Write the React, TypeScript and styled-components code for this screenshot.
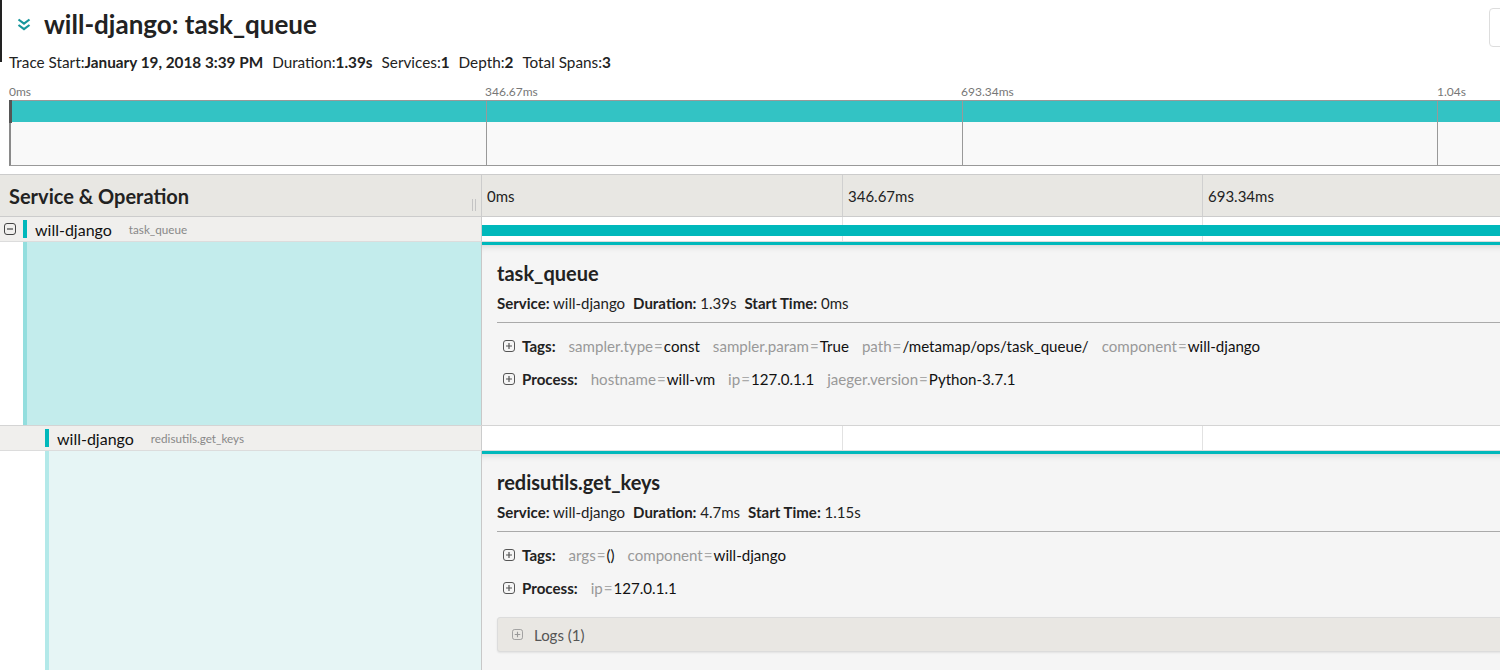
import React from "react";
import styled, { createGlobalStyle } from "styled-components";

const TEAL = "#00b8bb";

const GlobalStyle = createGlobalStyle`
  html, body { margin: 0; padding: 0; background: #fff; overflow: hidden; }
  body { font-family: Lato, "Open Sans", "Liberation Sans", sans-serif; color: #222; }
  * { box-sizing: border-box; }
`;

const Page = styled.div`
  width: 1922px;
  position: relative;
  &::before {
    content: "";
    position: absolute;
    left: 0;
    top: 0;
    width: 2px;
    height: 62px;
    background: #222;
  }
`;

const TitleRow = styled.header`
  display: grid;
  grid-template-columns: 1489px 240px;
  height: 48px;
  align-items: center;
`;

const TitleLeft = styled.div`
  display: flex;
  align-items: center;
  gap: 13px;
  padding-left: 17px;
`;

const Title = styled.h1`
  margin: 0;
  font-size: 26px;
  font-weight: 700;
  color: #222;
  line-height: 32px;
`;

const TopButton = styled.div`
  align-self: start;
  margin-top: 8px;
  height: 39px;
  border: 1px solid #ddd;
  border-radius: 4px;
  background: #fff;
`;

const MetaLine = styled.div`
  display: flex;
  gap: 9px;
  padding-left: 9px;
  height: 28px;
  line-height: 28px;
  font-size: 15.3px;
  color: #222;
`;

const Strong = styled.strong`
  font-weight: 700;
`;

const Minimap = styled.section`
  margin: 8px 0 0 9px;
  width: 1904px;
`;

const MiniLabels = styled.div`
  display: grid;
  grid-template-columns: repeat(4, 476px);
  height: 16px;
`;

const MiniLabel = styled.span`
  font-size: 12px;
  line-height: 15px;
  color: #777;
`;

const MiniBox = styled.div`
  position: relative;
  display: grid;
  grid-template-columns: repeat(4, 1fr);
  height: 66px;
  border: 1px solid #999;
  border-left: 2px solid #8a8a8a;
`;

const MiniCol = styled.div<{ $first?: boolean }>`
  display: flex;
  flex-direction: column;
  border-left: ${(p) => (p.$first ? "none" : "1px solid #999")};
`;

const MiniBand = styled.div`
  height: 21px;
  background: #33c3c4;
`;

const MiniRest = styled.div`
  flex: 1;
  background: #f9f9f9;
`;

const MiniHandle = styled.div`
  position: absolute;
  left: -2px;
  top: -1px;
  width: 3px;
  height: 23px;
  background: #555;
`;

const Table = styled.section`
  margin-top: 8px;
`;

const HeaderRow = styled.div`
  display: grid;
  grid-template-columns: 482px 1440px;
  height: 43px;
  background: #e8e7e3;
  border-top: 1px solid #ccc;
  border-bottom: 1px solid #ccc;
`;

const HeaderName = styled.div`
  display: flex;
  justify-content: space-between;
  align-items: center;
  padding-left: 9px;
  border-right: 1px solid #ccc;
  font-size: 20px;
  font-weight: 700;
  color: #222;
`;

const Resizer = styled.span`
  align-self: flex-end;
  margin: 0 5px 5px 0;
  width: 4px;
  height: 12px;
  border-left: 1px solid #c4c4c4;
  border-right: 1px solid #c4c4c4;
`;

const TickGrid = styled.div`
  position: relative;
  display: grid;
  grid-template-columns: repeat(4, 360px);
`;

const TickCell = styled.div<{ $first?: boolean; $light?: boolean }>`
  display: flex;
  align-items: center;
  padding-left: 5px;
  border-left: ${(p) =>
    p.$first ? "none" : `1px solid ${p.$light ? "#e2e2e2" : "#d0d0d0"}`};
  font-size: 15px;
  color: #222;
`;

const SpanRowBox = styled.div`
  display: grid;
  grid-template-columns: 482px 1440px;
  height: 25px;
  border-bottom: 1px solid #dcdcdc;
`;

const NameCell = styled.div<{ $indent: number }>`
  display: flex;
  align-items: center;
  padding-left: ${(p) => p.$indent}px;
  background: #f0efed;
  border-right: 1px solid #ccc;
`;

const ToggleSlot = styled.span`
  width: 23px;
  display: flex;
  align-items: center;
  padding-left: 4px;
`;

const Indicator = styled.span`
  width: 4px;
  height: 18px;
  background: ${TEAL};
  margin-right: 8px;
`;

const ServiceName = styled.span`
  font-size: 16px;
  color: #111;
`;

const OpName = styled.span`
  margin-left: 17px;
  font-size: 11.7px;
  color: #888;
`;

const Bar = styled.div`
  position: absolute;
  top: 8px;
  height: 11px;
  background: ${TEAL};
`;

const DetailRowBox = styled.div`
  display: grid;
  grid-template-columns: 482px 1440px;
  border-bottom: 1px solid #d4d4d4;
`;

const DetailLeft = styled.div<{ $indent: number }>`
  display: flex;
  padding-left: ${(p) => p.$indent}px;
  border-right: 1px solid #c8c8c8;
  background: #fff;
`;

const Accent = styled.div<{ $border: string; $fill: string }>`
  flex: 1;
  border-left: 4px solid ${(p) => p.$border};
  background: ${(p) => p.$fill};
`;

const DetailPanel = styled.div`
  background: #f5f5f5;
  border-top: 3px solid ${TEAL};
  box-shadow: inset 0 8px 8px -8px rgba(0, 0, 0, 0.18);
  padding: 16px 16px 34px 15px;
`;

const DetailTitle = styled.h2`
  margin: 0;
  font-size: 20px;
  font-weight: 700;
  line-height: 24px;
  color: #222;
`;

const DetailMeta = styled.div`
  display: flex;
  gap: 8px;
  margin-top: 8px;
  height: 20px;
  line-height: 20px;
  font-size: 15px;
  color: #222;
`;

const Divider = styled.hr`
  margin: 9px 0 0;
  border: none;
  border-top: 1px solid #aaa;
`;

const KVRow = styled.div<{ $first?: boolean }>`
  display: flex;
  align-items: center;
  gap: 13px;
  margin-top: ${(p) => (p.$first ? 11 : 9)}px;
  height: 24px;
  padding-left: 6px;
  font-size: 15.1px;
`;

const KVLabel = styled.span`
  display: flex;
  align-items: center;
  gap: 7px;
  font-weight: 700;
  color: #222;
`;

const KV = styled.span`
  color: #111;
`;

const Key = styled.span`
  color: #999;
`;

const Eq = styled.span`
  color: #aaa;
  margin: 0 1px;
`;

const LogsBox = styled.div`
  display: flex;
  align-items: center;
  gap: 11px;
  margin-top: 17px;
  height: 35px;
  padding-left: 14px;
  background: #e9e7e3;
  border: 1px solid #dcdcdc;
  border-radius: 3px;
  box-shadow: 0 1px 2px rgba(0, 0, 0, 0.08);
  font-size: 15px;
  color: #555;
`;

const ChevronIcon = () => (
  <svg width="14" height="13" viewBox="0 0 14 13">
    <path
      d="M1.5 1.5l5.5 4.2 5.5-4.2M1.5 7l5.5 4.2 5.5-4.2"
      fill="none"
      stroke="#17969c"
      strokeWidth="2.2"
    />
  </svg>
);

const SquareIcon = ({
  plus,
  size = 12,
  color = "#555",
}: {
  plus?: boolean;
  size?: number;
  color?: string;
}) => (
  <svg width={size} height={size} viewBox="0 0 12 12">
    <rect x="0.5" y="0.5" width="11" height="11" rx="2.5" fill="none" stroke={color} />
    <path d={plus ? "M3 6h6M6 3v6" : "M3 6h6"} stroke={color} strokeWidth="1.2" />
  </svg>
);

type Pair = [string, string];

type Span = {
  depth: number;
  service: string;
  op: string;
  start: number;
  duration: number;
  durationLabel: string;
  startLabel: string;
  hasChildren: boolean;
  tags: Pair[];
  process: Pair[];
  logs?: number;
  accentBorder: string;
  accentFill: string;
};

const TOTAL = 1390;

const spans: Span[] = [
  {
    depth: 0,
    service: "will-django",
    op: "task_queue",
    start: 0,
    duration: 1390,
    durationLabel: "1.39s",
    startLabel: "0ms",
    hasChildren: true,
    tags: [
      ["sampler.type", "const"],
      ["sampler.param", "True"],
      ["path", "/metamap/ops/task_queue/"],
      ["component", "will-django"],
    ],
    process: [
      ["hostname", "will-vm"],
      ["ip", "127.0.1.1"],
      ["jaeger.version", "Python-3.7.1"],
    ],
    accentBorder: "#93dede",
    accentFill: "#c3ecec",
  },
  {
    depth: 1,
    service: "will-django",
    op: "redisutils.get_keys",
    start: 1150,
    duration: 4.7,
    durationLabel: "4.7ms",
    startLabel: "1.15s",
    hasChildren: false,
    tags: [
      ["args", "()"],
      ["component", "will-django"],
    ],
    process: [["ip", "127.0.1.1"]],
    logs: 1,
    accentBorder: "#b3e9e9",
    accentFill: "#e6f5f5",
  },
];

const miniTicks = ["0ms", "346.67ms", "693.34ms", "1.04s"];
const ticks = ["0ms", "346.67ms", "693.34ms", "1.04s"];

const KVList = ({ label, pairs, first }: { label: string; pairs: Pair[]; first?: boolean }) => (
  <KVRow $first={first}>
    <KVLabel>
      <SquareIcon plus size={12} color="#555" />
      {label}:
    </KVLabel>
    {pairs.map(([k, v]) => (
      <KV key={k}>
        <Key>{k}</Key>
        <Eq>=</Eq>
        {v}
      </KV>
    ))}
  </KVRow>
);

const SpanRow = ({ span }: { span: Span }) => {
  const left = (span.start / TOTAL) * 1440;
  const width = Math.max((span.duration / TOTAL) * 1440, 2);
  return (
    <>
      <SpanRowBox>
        <NameCell $indent={span.depth * 22}>
          <ToggleSlot>{span.hasChildren && <SquareIcon size={12} color="#444" />}</ToggleSlot>
          <Indicator />
          <ServiceName>{span.service}</ServiceName>
          <OpName>{span.op}</OpName>
        </NameCell>
        <TickGrid>
          {ticks.map((t, i) => (
            <TickCell key={t} $first={i === 0} $light />
          ))}
          <Bar style={{ left, width }} />
        </TickGrid>
      </SpanRowBox>
      <DetailRowBox>
        <DetailLeft $indent={span.depth * 22 + 23}>
          <Accent $border={span.accentBorder} $fill={span.accentFill} />
        </DetailLeft>
        <DetailPanel>
          <DetailTitle>{span.op}</DetailTitle>
          <DetailMeta>
            <span>
              <Strong>Service:</Strong> {span.service}
            </span>
            <span>
              <Strong>Duration:</Strong> {span.durationLabel}
            </span>
            <span>
              <Strong>Start Time:</Strong> {span.startLabel}
            </span>
          </DetailMeta>
          <Divider />
          <KVList label="Tags" pairs={span.tags} first />
          <KVList label="Process" pairs={span.process} />
          {span.logs !== undefined && (
            <LogsBox>
              <SquareIcon plus size={11} color="#999" />
              Logs ({span.logs})
            </LogsBox>
          )}
        </DetailPanel>
      </DetailRowBox>
    </>
  );
};

export default function App() {
  return (
    <Page>
      <GlobalStyle />
      <TitleRow>
        <TitleLeft>
          <ChevronIcon />
          <Title>will-django: task_queue</Title>
        </TitleLeft>
        <TopButton />
      </TitleRow>
      <MetaLine>
        <span>
          Trace Start:<Strong>January 19, 2018 3:39 PM</Strong>
        </span>
        <span>
          Duration:<Strong>1.39s</Strong>
        </span>
        <span>
          Services:<Strong>1</Strong>
        </span>
        <span>
          Depth:<Strong>2</Strong>
        </span>
        <span>
          Total Spans:<Strong>3</Strong>
        </span>
      </MetaLine>
      <Minimap>
        <MiniLabels>
          {miniTicks.map((t) => (
            <MiniLabel key={t}>{t}</MiniLabel>
          ))}
        </MiniLabels>
        <MiniBox>
          {miniTicks.map((t, i) => (
            <MiniCol key={t} $first={i === 0}>
              <MiniBand />
              <MiniRest />
            </MiniCol>
          ))}
          <MiniHandle />
        </MiniBox>
      </Minimap>
      <Table>
        <HeaderRow>
          <HeaderName>
            Service &amp; Operation
            <Resizer />
          </HeaderName>
          <TickGrid>
            {ticks.map((t, i) => (
              <TickCell key={t} $first={i === 0}>
                {t}
              </TickCell>
            ))}
          </TickGrid>
        </HeaderRow>
        {spans.map((s) => (
          <SpanRow key={s.op} span={s} />
        ))}
      </Table>
    </Page>
  );
}
